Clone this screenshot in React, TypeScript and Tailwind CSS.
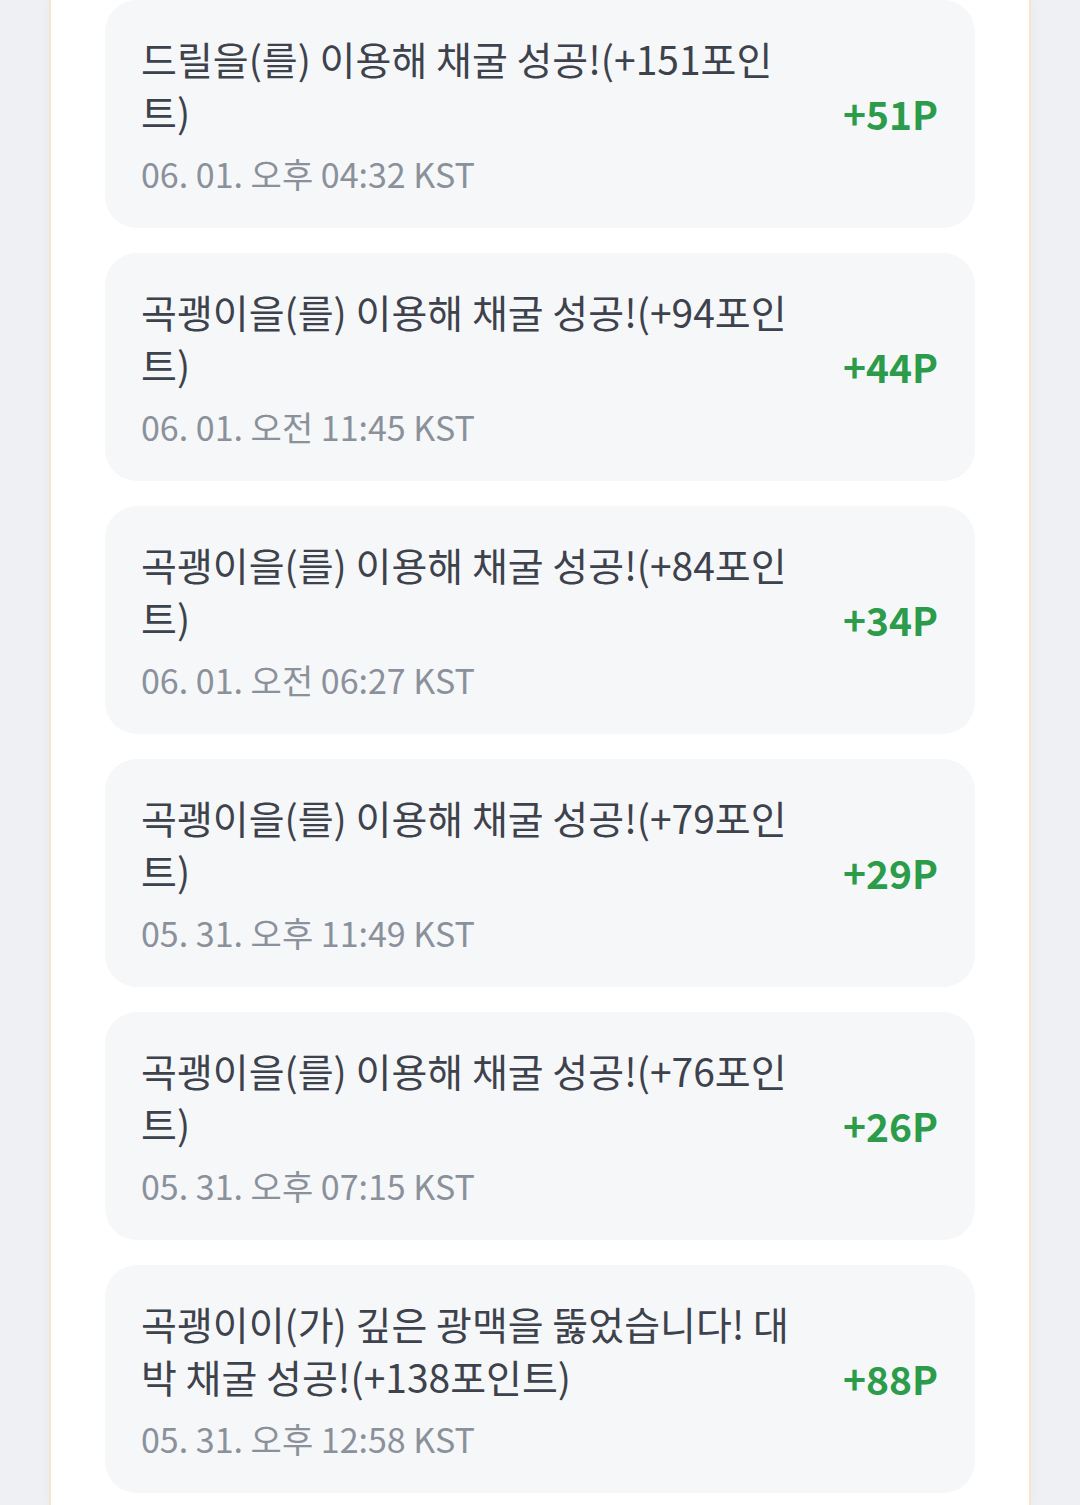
import React from 'react';

interface MiningLog {
  message: string;
  time: string;
  gain: number;
}

const logs: MiningLog[] = [
  { message: '드릴을(를) 이용해 채굴 성공!(+151포인트)', time: '06. 01. 오후 04:32 KST', gain: 51 },
  { message: '곡괭이을(를) 이용해 채굴 성공!(+94포인트)', time: '06. 01. 오전 11:45 KST', gain: 44 },
  { message: '곡괭이을(를) 이용해 채굴 성공!(+84포인트)', time: '06. 01. 오전 06:27 KST', gain: 34 },
  { message: '곡괭이을(를) 이용해 채굴 성공!(+79포인트)', time: '05. 31. 오후 11:49 KST', gain: 29 },
  { message: '곡괭이을(를) 이용해 채굴 성공!(+76포인트)', time: '05. 31. 오후 07:15 KST', gain: 26 },
  { message: '곡괭이이(가) 깊은 광맥을 뚫었습니다! 대박 채굴 성공!(+138포인트)', time: '05. 31. 오후 12:58 KST', gain: 88 },
];

const LogCard: React.FC<{ log: MiningLog }> = ({ log }) => (
  <div className="flex items-center justify-between rounded-[32px] bg-[#f6f7f9] pl-9 pr-[37px] pt-[32px] pb-[30px]">
    <div className="min-w-0 w-[665px]">
      <p className="text-[39px] leading-[53px] text-[#3d424c] break-all">{log.message}</p>
      <p className="mt-[12px] text-[34px] leading-[48px] text-[#8a919b]">{log.time}</p>
    </div>
    <span className="shrink-0 mb-[4px] text-[39px] font-bold text-[#2c9c4b]">+{log.gain}P</span>
  </div>
);

export default function App() {
  return (
    <div
      className="min-h-[1505px] w-[1080px] overflow-hidden bg-[#eef0f4] px-[49px]"
      style={{ fontFamily: '"Noto Sans CJK KR", "Noto Sans", sans-serif' }}
    >
      <div className="min-h-[1505px] border-x-2 border-[#f4e7cf] bg-white px-[54px] shadow-[0_0_10px_rgba(0,0,0,0.04)]">
        <div className="flex flex-col gap-[25px]">
          {logs.map((log, i) => (
            <LogCard key={i} log={log} />
          ))}
        </div>
      </div>
    </div>
  );
}
